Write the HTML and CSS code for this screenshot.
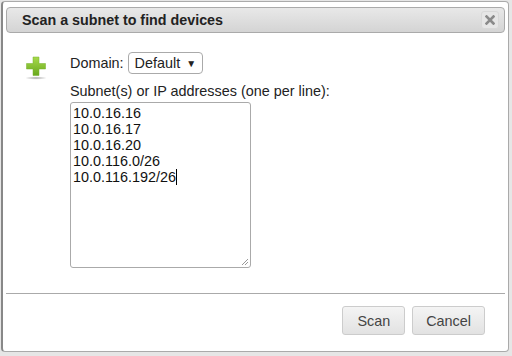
FILE: index.html
```html
<!DOCTYPE html>
<html lang="en">
<head>
    <meta charset="UTF-8">
    <title>Scan a subnet</title>
    <link rel="stylesheet" href="styles.css">
</head>
<body>
    <div class="dialog">
        <div class="titlebar">
            <span class="title">Scan a subnet to find devices</span>
            <button class="close" title="Close">
                <svg width="10" height="10" viewBox="0 0 10 10">
                    <path d="M1.5 1.5 L8.5 8.5 M8.5 1.5 L1.5 8.5" stroke="#8a8a8a" stroke-width="2.6" stroke-linecap="square"/>
                </svg>
            </button>
        </div>

        <div class="content">
            <div class="icon">
                <svg width="24" height="26" viewBox="0 0 24 26">
                    <defs>
                        <linearGradient id="plusGrad" x1="0" y1="0" x2="0" y2="1">
                            <stop offset="0" stop-color="#a8da4c"/>
                            <stop offset="1" stop-color="#68a81c"/>
                        </linearGradient>
                        <radialGradient id="shadowGrad">
                            <stop offset="0" stop-color="#000" stop-opacity="0.35"/>
                            <stop offset="1" stop-color="#000" stop-opacity="0"/>
                        </radialGradient>
                    </defs>
                    <ellipse cx="12" cy="23" rx="11" ry="1.7" fill="url(#shadowGrad)"/>
                    <path d="M9 2 H15 V8.5 H21.5 V14 H15 V20.5 H9 V14 H2.5 V8.5 H9 Z" fill="url(#plusGrad)" stroke="#74b028" stroke-width="0.5"/>
                </svg>
            </div>

            <div class="form">
                <div class="row">
                    <label class="label">Domain:</label>
                    <div class="select">Default <span class="arrow">&#9660;</span></div>
                </div>
                <label class="label">Subnet(s) or IP addresses (one per line):</label>
                <div class="textarea">
                    <div>10.0.16.16</div>
                    <div>10.0.16.17</div>
                    <div>10.0.16.20</div>
                    <div>10.0.116.0/26</div>
                    <div>10.0.116.192/26<span class="caret"></span></div>
                    <svg class="grip" width="8" height="8" viewBox="0 0 8 8">
                        <path d="M7 1 L1 7 M7 4 L4 7" stroke="#999" stroke-width="1"/>
                    </svg>
                </div>
            </div>
        </div>

        <div class="buttons">
            <button class="btn">Scan</button>
            <button class="btn">Cancel</button>
        </div>
    </div>
</body>
</html>
```

FILE: styles.css
```css
* {
    margin: 0;
    padding: 0;
    box-sizing: border-box;
}

body {
    font-family: "Liberation Sans", Arial, sans-serif;
    background: #e6e6e6;
    padding: 1px 3px 3px 1px;
    height: 356px;
    overflow: hidden;
    color: #222;
}

.dialog {
    height: 351px;
    background: #fff;
    border: 1px solid #aaa;
    border-left: 2px solid #888;
    border-radius: 4px;
    padding: 5px 3px 0 3px;
    display: flex;
    flex-direction: column;
}

.titlebar {
    height: 26px;
    border: 1px solid #aaa;
    border-radius: 4px;
    background: linear-gradient(#e8e8e8, #d4d4d4);
    display: flex;
    align-items: center;
    justify-content: space-between;
    padding: 0 5px 0 15px;
}

.title {
    font-size: 14.3px;
    font-weight: bold;
    color: #222;
}

.close {
    width: 18px;
    height: 18px;
    border: 1px solid #d8d8d8;
    border-radius: 3px;
    background: #e6e6e6;
    display: flex;
    align-items: center;
    justify-content: center;
}

.content {
    display: flex;
    padding: 19px 0 0 18px;
    height: 261px;
    border-bottom: 1px solid #aaa;
}

.icon {
    width: 46px;
    padding-top: 3px;
}

.form {
    display: flex;
    flex-direction: column;
}

.row {
    display: flex;
    align-items: center;
    gap: 4px;
    margin-bottom: 9px;
}

.label {
    font-size: 14.4px;
    color: #222;
}

.select {
    height: 22px;
    border: 1px solid #aaa;
    border-radius: 4px;
    padding: 0 6px 0 6px;
    font-size: 14.4px;
    display: flex;
    align-items: center;
    gap: 6px;
}

.arrow {
    font-size: 10px;
}

.textarea {
    position: relative;
    margin-top: 3px;
    width: 181px;
    height: 166px;
    border: 1px solid #aaa;
    border-radius: 3px;
    padding: 2px 2px;
    font-size: 14.4px;
    line-height: 16px;
    color: #111;
}

.caret {
    display: inline-block;
    width: 1px;
    height: 16px;
    background: #000;
    vertical-align: top;
}

.grip {
    position: absolute;
    right: 1px;
    bottom: 1px;
}

.buttons {
    display: flex;
    justify-content: flex-end;
    gap: 7px;
    padding: 12px 20px 0 0;
}

.btn {
    height: 29px;
    padding: 0 14px;
    font-family: "Liberation Sans", Arial, sans-serif;
    font-size: 14.4px;
    color: #444;
    border: 1px solid #ccc;
    border-radius: 3px;
    background: linear-gradient(#f4f4f4, #e2e2e2);
}

.btn:last-child {
    padding: 0 13px;
}
```
